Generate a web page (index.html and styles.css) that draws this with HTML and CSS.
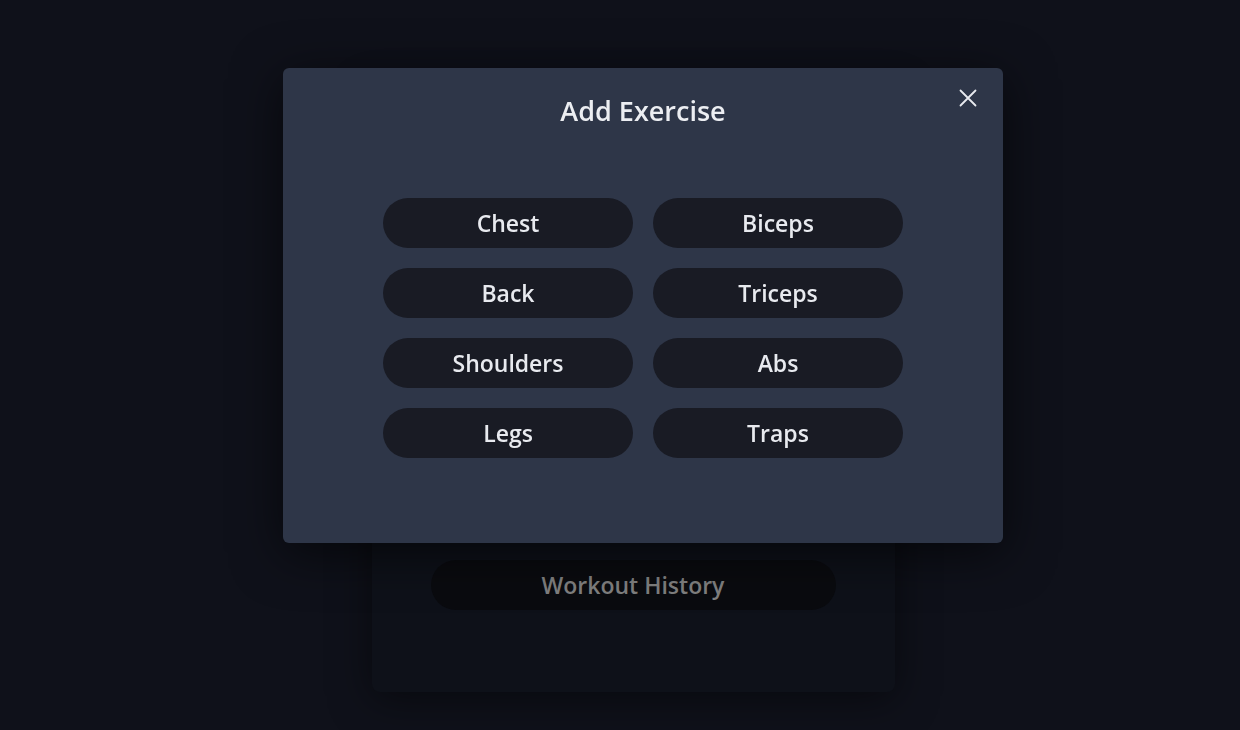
FILE: index.html
```html
<!DOCTYPE html>
<html lang="en">
<head>
    <meta charset="UTF-8">
    <meta name="viewport" content="width=device-width, initial-scale=1.0">
    <title>Workout Tracker</title>
    <link rel="stylesheet" href="styles.css">
</head>
<body>
    <!-- Page behind the modal -->
    <div class="page">
        <div class="main-card">
            <button class="page-btn history-btn">Workout History</button>
        </div>
    </div>

    <!-- Add Exercise Modal -->
    <div class="overlay">
        <div class="modal">
            <button class="close-btn" aria-label="Close">
                <svg width="18" height="18" viewBox="0 0 18 18">
                    <path d="M1.5 1.5 L16.5 16.5 M16.5 1.5 L1.5 16.5" stroke="#e8eaef" stroke-width="1.8" stroke-linecap="round" fill="none"/>
                </svg>
            </button>
            <h2 class="modal-title">Add Exercise</h2>
            <div class="muscle-grid">
                <button class="muscle-btn">Chest</button>
                <button class="muscle-btn">Biceps</button>
                <button class="muscle-btn">Back</button>
                <button class="muscle-btn">Triceps</button>
                <button class="muscle-btn">Shoulders</button>
                <button class="muscle-btn">Abs</button>
                <button class="muscle-btn">Legs</button>
                <button class="muscle-btn">Traps</button>
            </div>
        </div>
    </div>
</body>
</html>
```

FILE: styles.css
```css
body {
    font-family: 'Open Sans', 'Noto Sans', sans-serif;
    background-color: #0f111a;
    color: #e8eaef;
    margin: 0;
    padding: 0;
    height: 730px;
    overflow: hidden;
}

.page {
    display: flex;
    justify-content: center;
    padding-left: 26px;
    padding-top: 90px;
}

.main-card {
    width: 523px;
    height: 602px;
    background: #0e1119;
    border-radius: 8px;
    box-shadow: 0 6px 40px rgba(0,0,0,0.5);
    display: flex;
    flex-direction: column;
    align-items: center;
    justify-content: flex-end;
    padding-bottom: 82px;
    box-sizing: border-box;
}

.page-btn {
    width: 405px;
    height: 50px;
    border: none;
    border-radius: 25px;
    background: #0a0b0f;
    color: #808080;
    font-family: inherit;
    font-size: 23px;
    font-weight: 600;
}

.overlay {
    position: fixed;
    inset: 0;
    display: flex;
    justify-content: center;
    align-items: flex-start;
    padding-top: 68px;
    padding-left: 46px;
}

.modal {
    position: relative;
    width: 720px;
    height: 475px;
    background: #2e3648;
    border-radius: 6px;
    box-shadow: 0 10px 50px rgba(0,0,0,0.6);
    box-sizing: border-box;
    padding-top: 23px;
    display: flex;
    flex-direction: column;
    align-items: center;
}

.close-btn {
    position: absolute;
    top: 21px;
    right: 26px;
    background: none;
    border: none;
    padding: 0;
    width: 18px;
    height: 18px;
    cursor: pointer;
}

.modal-title {
    margin: 0;
    font-size: 27px;
    font-weight: 600;
    line-height: 40px;
    color: #eceef2;
}

.muscle-grid {
    margin-top: 67px;
    display: grid;
    grid-template-columns: 250px 250px;
    gap: 20px;
}

.muscle-btn {
    height: 50px;
    border: none;
    border-radius: 25px;
    background: #191b24;
    color: #e8eaef;
    font-family: inherit;
    font-size: 23px;
    font-weight: 600;
    cursor: pointer;
}

.muscle-btn:hover {
    background: #22252f;
}
```
